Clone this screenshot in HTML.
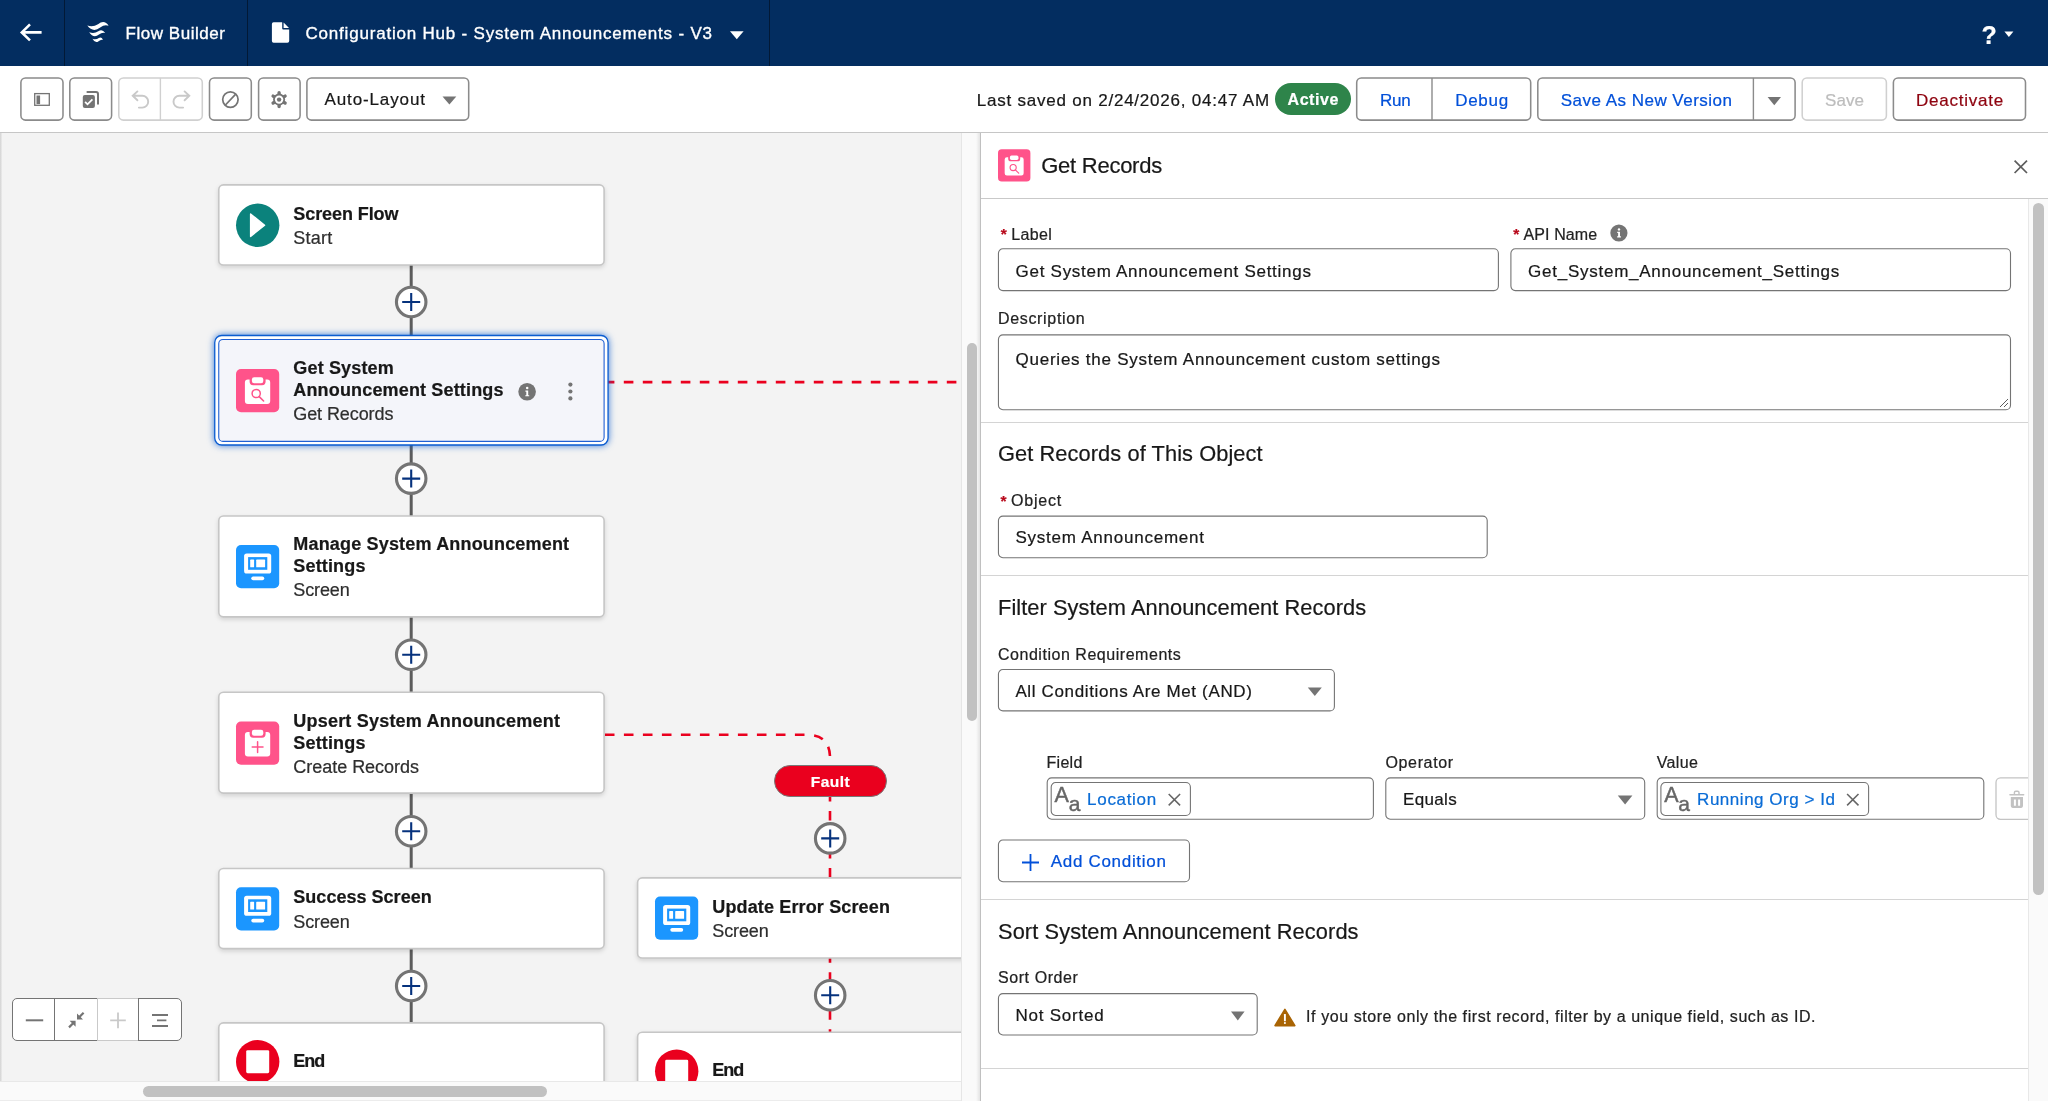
<!DOCTYPE html>
<html>
<head>
<meta charset="utf-8">
<title>Flow Builder</title>
<style>
*{box-sizing:border-box;margin:0;padding:0}
html,body{width:2048px;height:1101px;overflow:hidden;background:#fff;font-family:"Liberation Sans",sans-serif;color:#181818}
.tx{position:absolute;white-space:pre;-webkit-text-stroke:.22px currentColor}
body{will-change:transform}
.a{position:absolute}
svg{position:absolute;overflow:visible}
#hdr{position:absolute;left:0;top:0;width:2048px;height:66px;background:#032d60;overflow:hidden}
#hdr .dv{position:absolute;top:0;width:1px;height:66px;background:#021936}
#tb{position:absolute;left:0;top:66px;width:2048px;height:67px;background:#fff;border-bottom:1px solid #c6c6c6;z-index:5}
.bt{position:absolute;border:1.2px solid #747474;border-radius:5px;background:#fff}
.bt.dis{border-color:#c9c9c9}
#canvas{position:absolute;left:0;top:132px;width:961px;height:949px;background:#f3f3f3;overflow:hidden}
#hscroll{position:absolute;left:0;top:1081px;width:961px;height:20px;background:#fafafa;border-top:1px solid #e8e8e8;border-bottom:1px solid #ececec}
#vtrack{position:absolute;left:961px;top:132px;width:19px;height:969px;background:linear-gradient(90deg,#fafafa 0,#fafafa 78%,#e4e4e4 100%);border-left:1px solid #e6e6e6}
.thumb{position:absolute;background:#c1c1c1;border-radius:6px}
#panel{position:absolute;left:980px;top:132px;width:1068px;height:969px;background:#fff;border-left:1px solid #c0c0c0;overflow:hidden}
.node{position:absolute;background:#fff;border:1px solid #c9c9c9;border-radius:5px;box-shadow:0 2px 3px rgba(0,0,0,.14)}
svg.nb{filter:drop-shadow(0 2px 2px rgba(0,0,0,.13))}
svg.nbs{filter:drop-shadow(0 0 3.6px rgba(11,92,208,.8))}
.vl{position:absolute;width:3px;background:#5c5c5c}
.plus{position:absolute;width:33px;height:33px;border-radius:50%;border:3px solid #747474;background:#fff}
.plus i{position:absolute;background:#06327d}
.plus i.h{left:4.5px;top:12.5px;width:18px;height:2px}
.plus i.v{left:12.5px;top:4.5px;width:2px;height:18px}
.inp{position:absolute;border:1px solid #747474;border-radius:5px;background:#fff}
.hr{position:absolute;left:0;width:1047px;height:1px;background:#d4d4d4}
.pill{position:absolute;border:1px solid #747474;border-radius:5px;background:#fff}

</style>
</head>
<body>
<div id="hdr"><div class="dv" style="left:64px"></div><div class="dv" style="left:247px"></div><div class="dv" style="left:769px"></div><svg style="left:0;top:0" width="66" height="66"><path d="M41.6 32.4H22M30 24.4L21.8 32.4L30 40.4" fill="none" stroke="#fff" stroke-width="2.6" stroke-linecap="butt" stroke-linejoin="miter"/></svg><svg style="left:0;top:0" width="130" height="66"><g fill="#fff">
<path d="M87.3 25.6Q93 27.6 98 24.2Q104.5 19.3 108.6 25.8Q104.5 24.2 100.2 27.6Q93 33.2 87.3 25.6Z"/>
<path d="M89.2 32.2Q94 34.2 98.3 31.2Q102.3 28.4 105.2 33Q102 32 99 34.6Q93.5 38.8 89.2 32.2Z"/>
<path d="M92.4 38.8Q96 40.2 98.8 38Q101.3 36.2 103 39.8Q100.6 39.2 98.6 41.2Q95.2 43.8 92.4 38.8Z"/>
</g></svg><div class="tx" style="left:125.5px;top:25px;font-size:17px;line-height:17px;font-weight:normal;color:#fff;letter-spacing:0.541px;-webkit-text-stroke:0.35px #fff;">Flow Builder</div><svg style="left:0;top:0" width="300" height="66"><path d="M273.6 22.2H282.2V28.4Q282.2 29.4 283.2 29.4H289.2V41Q289.2 42.8 287.4 42.8H273.6Q271.9 42.8 271.9 41V24Q271.9 22.2 273.6 22.2ZM283.6 22.4L289 28H283.6Z" fill="#fff"/></svg><div class="tx" style="left:305.5px;top:25px;font-size:17px;line-height:17px;font-weight:normal;color:#fff;letter-spacing:0.798px;-webkit-text-stroke:0.35px #fff;">Configuration Hub - System Announcements - V3</div><svg style="left:0;top:0" width="760" height="66"><path d="M730 31.2H743.6L736.8 39.2Z" fill="#fff"/></svg><div class="tx" style="left:1981.5px;top:23px;font-size:25px;line-height:25px;font-weight:bold;color:#fff;letter-spacing:0.000px;">?</div><svg style="left:1990px;top:0" width="40" height="66"><path d="M14.4 31.6H23.4L18.9 37Z" fill="#fff"/></svg></div>
<div id="tb"><svg style="left:16px;top:7px" width="52" height="53"><g transform="translate(0.90 0.90)"><rect x="4" y="4" width="42.10" height="42.20" rx="4.6" fill="#fff" stroke="#8b8b8b" stroke-width="1.55"/></g></svg><svg style="left:65px;top:7px" width="52" height="53"><g transform="translate(0.80 0.90)"><rect x="4" y="4" width="41.80" height="42.20" rx="4.6" fill="#fff" stroke="#8b8b8b" stroke-width="1.55"/></g></svg><svg style="left:114px;top:7px" width="94" height="53"><g transform="translate(0.80 0.90)"><rect x="4" y="4" width="83.50" height="42.20" rx="4.6" fill="#fff" stroke="#d0d0d0" stroke-width="1.55"/></g></svg><svg style="left:205px;top:7px" width="52" height="53"><g transform="translate(0.50 0.90)"><rect x="4" y="4" width="41.80" height="42.20" rx="4.6" fill="#fff" stroke="#8b8b8b" stroke-width="1.55"/></g></svg><svg style="left:254px;top:7px" width="52" height="53"><g transform="translate(0.60 0.90)"><rect x="4" y="4" width="41.50" height="42.20" rx="4.6" fill="#fff" stroke="#8b8b8b" stroke-width="1.55"/></g></svg><svg style="left:302px;top:7px" width="172" height="53"><g transform="translate(0.90 0.90)"><rect x="4" y="4" width="161.80" height="42.20" rx="4.6" fill="#fff" stroke="#8b8b8b" stroke-width="1.55"/></g></svg><svg style="left:158px;top:11px" width="6" height="45"><g transform="translate(0.40 0.90)"><path d="M2 0V42.20" stroke="#d0d0d0" stroke-width="1.4"/></g></svg><svg style="left:0;top:0" width="480" height="66"><rect x="34.7" y="27.6" width="14.6" height="11.7" fill="none" stroke="#747474" stroke-width="1.3"/><rect x="36.5" y="29.5" width="3.6" height="8.6" fill="#747474"/><path d="M87.4 26.1H96Q98 26.1 98 28.1V37.8" fill="none" stroke="#747474" stroke-width="2" stroke-linecap="round"/><rect x="82.8" y="29" width="12.1" height="13" rx="2" fill="#747474"/><path d="M85.1 35.9L87.5 38.3L92.4 33.4" fill="none" stroke="#fff" stroke-width="1.8"/><path d="M137.4 25.4L132.7 29.8L137.4 34.3M132.9 29.8H142.3A5.9 5.9 0 0 1 142.3 41.6H138.9" fill="none" stroke="#c9c9c9" stroke-width="1.9" stroke-linecap="round"/><path d="M184.6 25.4L189.3 29.8L184.6 34.3M189.1 29.8H179.4A5.9 5.9 0 0 0 179.4 41.6H183.1" fill="none" stroke="#c9c9c9" stroke-width="1.9" stroke-linecap="round"/><circle cx="230.4" cy="33.6" r="7.7" fill="none" stroke="#747474" stroke-width="1.7"/><path d="M225.4 39L235.5 28.3" stroke="#747474" stroke-width="1.7"/><path d="M279.10 29.10L279.10 26.70M283.00 31.35L285.08 30.15M283.00 35.85L285.08 37.05M279.10 38.10L279.10 40.50M275.20 35.85L273.12 37.05M275.20 31.35L273.12 30.15" stroke="#747474" stroke-width="3.4" stroke-linecap="round"/><circle cx="279.1" cy="33.6" r="6" fill="#747474"/><circle cx="279.1" cy="33.6" r="4.2" fill="#fff"/><circle cx="279.1" cy="33.6" r="2.2" fill="#747474"/><path d="M442.5 30.4H456.3L449.4 38.6Z" fill="#747474"/></svg><div class="tx" style="left:324.5px;top:25px;font-size:17px;line-height:17px;font-weight:normal;color:#181818;letter-spacing:0.881px;">Auto-Layout</div><div class="tx" style="left:976.7px;top:26px;font-size:17px;line-height:17px;font-weight:normal;color:#181818;letter-spacing:0.779px;">Last saved on 2/24/2026, 04:47 AM</div><div class="a" style="left:1275px;top:16.7px;width:75.6px;height:32px;border-radius:16px;background:#2e844a"></div><div class="tx" style="left:1287.6px;top:26px;font-size:16px;line-height:16px;font-weight:bold;color:#fff;letter-spacing:0.534px;">Active</div><svg style="left:1352px;top:7px" width="184" height="53"><g transform="translate(0.70 0.90)"><rect x="4" y="4" width="174.00" height="42.20" rx="4.6" fill="#fff" stroke="#8b8b8b" stroke-width="1.55"/></g></svg><svg style="left:1430px;top:11px" width="5" height="45"><g transform="translate(0.00 0.90)"><path d="M2 0V42.20" stroke="#8b8b8b" stroke-width="1.4"/></g></svg><div class="tx" style="left:1379.9px;top:26px;font-size:17px;line-height:17px;font-weight:normal;color:#0250d9;letter-spacing:-0.244px;">Run</div><div class="tx" style="left:1455.2px;top:26px;font-size:17px;line-height:17px;font-weight:normal;color:#0250d9;letter-spacing:0.723px;">Debug</div><svg style="left:1533px;top:7px" width="268" height="53"><g transform="translate(0.80 0.90)"><rect x="4" y="4" width="257.30" height="42.20" rx="4.6" fill="#fff" stroke="#8b8b8b" stroke-width="1.55"/></g></svg><svg style="left:1751px;top:11px" width="6" height="45"><g transform="translate(0.40 0.90)"><path d="M2 0V42.20" stroke="#8b8b8b" stroke-width="1.4"/></g></svg><div class="tx" style="left:1560.7px;top:26px;font-size:17px;line-height:17px;font-weight:normal;color:#0250d9;letter-spacing:0.487px;">Save As New Version</div><svg style="left:1760px;top:0" width="30" height="66"><path d="M7.6 31H21L14.3 39.2Z" fill="#747474"/></svg><svg style="left:1798px;top:7px" width="94" height="53"><g transform="translate(0.20 0.90)"><rect x="4" y="4" width="84.20" height="42.20" rx="4.6" fill="#fff" stroke="#d0d0d0" stroke-width="1.55"/></g></svg><div class="tx" style="left:1825.1px;top:26px;font-size:17px;line-height:17px;font-weight:normal;color:#bdbdbd;letter-spacing:0.050px;">Save</div><svg style="left:1889px;top:7px" width="142" height="53"><g transform="translate(0.40 0.90)"><rect x="4" y="4" width="132.10" height="42.20" rx="4.6" fill="#fff" stroke="#8b8b8b" stroke-width="1.55"/></g></svg><div class="tx" style="left:1916.1px;top:26px;font-size:17px;line-height:17px;font-weight:normal;color:#8e030f;letter-spacing:0.741px;">Deactivate</div></div>
<div id="canvas"><div class="a" style="left:0;top:0;width:2px;height:949px;background:linear-gradient(90deg,#d2d2d2,#ececec)"></div><svg style="left:409px;top:133px" width="6" height="759"><g transform="translate(0.00 0.00)"><path d="M2.2 0V758" stroke="#5c5c5c" stroke-width="3"/></g></svg><svg style="left:394px;top:153px" width="36" height="35"><g transform="translate(0.20 0.00)"><circle cx="17" cy="17" r="14.75" fill="#fff" stroke="#747474" stroke-width="3.1"/><path d="M8 17H26M17 8V26" stroke="#06327d" stroke-width="2.1"/></g></svg><svg style="left:394px;top:329px" width="36" height="36"><g transform="translate(0.20 0.60)"><circle cx="17" cy="17" r="14.75" fill="#fff" stroke="#747474" stroke-width="3.1"/><path d="M8 17H26M17 8V26" stroke="#06327d" stroke-width="2.1"/></g></svg><svg style="left:394px;top:505px" width="36" height="36"><g transform="translate(0.20 0.80)"><circle cx="17" cy="17" r="14.75" fill="#fff" stroke="#747474" stroke-width="3.1"/><path d="M8 17H26M17 8V26" stroke="#06327d" stroke-width="2.1"/></g></svg><svg style="left:394px;top:682px" width="36" height="36"><g transform="translate(0.20 0.20)"><circle cx="17" cy="17" r="14.75" fill="#fff" stroke="#747474" stroke-width="3.1"/><path d="M8 17H26M17 8V26" stroke="#06327d" stroke-width="2.1"/></g></svg><svg style="left:394px;top:837px" width="36" height="35"><g transform="translate(0.20 0.00)"><circle cx="17" cy="17" r="14.75" fill="#fff" stroke="#747474" stroke-width="3.1"/><path d="M8 17H26M17 8V26" stroke="#06327d" stroke-width="2.1"/></g></svg><svg style="left:0;top:0" width="962" height="949"><g fill="none" stroke="#ea001e" stroke-width="2.6" stroke-dasharray="9.6 9.4"><path d="M604.8 250.10000000000002H962"/><path d="M604.9 602.8H807Q830 602.8 830 625.8"/><path d="M830 660V746"/><path d="M830 821.2V902"/></g></svg><svg style="left:813px;top:689px" width="36" height="36"><g transform="translate(0.20 0.40)"><circle cx="17" cy="17" r="14.75" fill="#fff" stroke="#747474" stroke-width="3.1"/><path d="M8 17H26M17 8V26" stroke="#06327d" stroke-width="2.1"/></g></svg><svg style="left:813px;top:846px" width="36" height="36"><g transform="translate(0.20 0.20)"><circle cx="17" cy="17" r="14.75" fill="#fff" stroke="#747474" stroke-width="3.1"/><path d="M8 17H26M17 8V26" stroke="#06327d" stroke-width="2.1"/></g></svg><div class="a" style="left:220px;top:54px;width:0;height:0"><svg class="nb" style="left:-12px;top:-12px" width="408" height="102"><g transform="translate(0.80 0.90)"><rect x="10" y="10" width="385.30" height="80.10" rx="4.6" fill="#fff" stroke="#c6c6c6" stroke-width="1.6"/></g></svg><svg style="left:16px;top:17px" width="45" height="45"><svg x="0.00" y="0.60" width="43.4" height="43.4" viewBox="0 0 43.4 43.4" overflow="visible"><circle cx="21.7" cy="21.7" r="21.7" fill="#0b827c"/><path d="M14.6 10.4L28.6 21.6L14.6 32.8Z" fill="#fff" stroke="#fff" stroke-width="1.4" stroke-linejoin="round"/></svg></svg><div class="tx" style="left:73.3px;top:19px;font-size:18px;line-height:18px;font-weight:bold;color:#181818;letter-spacing:-0.083px;">Screen Flow</div><div class="tx" style="left:73.3px;top:43px;font-size:18px;line-height:18px;font-weight:normal;color:#2e2e2e;letter-spacing:0.246px;">Start</div></div><div class="a" style="left:220px;top:208px;width:0;height:0"><svg class="nbs" style="left:-20px;top:-19px" width="424" height="139"><g transform="translate(0.75 0.50)"><rect x="14" y="14" width="393.30" height="109.50" rx="7" fill="#fff" stroke="#0b5cd0" stroke-width="1.3"/></g></svg><svg style="left:-12px;top:-11px" width="408" height="124"><g transform="translate(0.75 0.50)"><rect x="10" y="10" width="385.35" height="101.90" rx="4.2" fill="#f4f5fa" stroke="#1f5fd3" stroke-width="1.1"/></g></svg><svg style="left:16px;top:29px" width="45" height="45"><svg x="0.00" y="0.00" width="43.2" height="43.2" viewBox="0 0 43.2 43.2" overflow="visible"><rect width="43.2" height="43.2" rx="5" fill="#ff538a"/>
<path d="M11.9 10.6H13.6V12.6Q13.6 16.2 17.2 16.2H26Q29.6 16.2 29.6 12.6V10.6H31.2Q34.2 10.6 34.2 13.6V32.1Q34.2 35.1 31.2 35.1H11.9Q8.9 35.1 8.9 32.1V13.6Q8.9 10.6 11.9 10.6Z" fill="#fff"/>
<rect x="15.9" y="8.3" width="11.4" height="6" rx="2.2" fill="#fff"/>
<circle cx="20.2" cy="24.5" r="4.1" fill="none" stroke="#ff538a" stroke-width="1.5"/><path d="M23.2 27.6L27.6 32" stroke="#ff538a" stroke-width="1.6" stroke-linecap="round"/></svg></svg><div class="tx" style="left:73.3px;top:19px;font-size:18px;line-height:18px;font-weight:bold;color:#181818;letter-spacing:0.000px;letter-spacing:.16px;">Get System</div><div class="tx" style="left:73.3px;top:41px;font-size:18px;line-height:18px;font-weight:bold;color:#181818;letter-spacing:0.159px;">Announcement Settings</div><div class="tx" style="left:73.3px;top:65px;font-size:18px;line-height:18px;font-weight:normal;color:#2e2e2e;letter-spacing:-0.095px;">Get Records</div><svg style="left:298px;top:43px" width="19" height="19"><g transform="translate(0.30 0.00)"><circle cx="8.8" cy="8.8" r="8.8" fill="#747474"/><circle cx="8.9" cy="5.1" r="1.25" fill="#fff"/><path d="M7.1 7.6H9.9V12.2H10.9V13.3H7V12.2H8V8.7H7.1Z" fill="#fff"/></g></svg><svg style="left:348px;top:42px" width="6" height="6"><g transform="translate(0.30 0.50)"><circle cx="2.1" cy="2.1" r="2.1" fill="#747474"/></g></svg><svg style="left:348px;top:49px" width="6" height="6"><g transform="translate(0.30 0.40)"><circle cx="2.1" cy="2.1" r="2.1" fill="#747474"/></g></svg><svg style="left:348px;top:56px" width="6" height="6"><g transform="translate(0.30 0.30)"><circle cx="2.1" cy="2.1" r="2.1" fill="#747474"/></g></svg></div><div class="a" style="left:220px;top:385px;width:0;height:0"><svg class="nb" style="left:-12px;top:-11px" width="408" height="122"><g transform="translate(0.80 0.00)"><rect x="10" y="10" width="385.30" height="100.90" rx="4.6" fill="#fff" stroke="#c6c6c6" stroke-width="1.6"/></g></svg><svg style="left:16px;top:28px" width="45" height="45"><svg x="0.00" y="0.00" width="43.2" height="43.2" viewBox="0 0 43.2 43.2" overflow="visible"><rect width="43.2" height="43.2" rx="5" fill="#1b96ff"/>
<rect x="8.1" y="8.5" width="27.1" height="20.1" rx="2.6" fill="#fff"/><rect x="12.1" y="12.1" width="19.2" height="12.7" fill="#1b96ff"/>
<rect x="14.2" y="14.6" width="3.9" height="7.7" rx=".6" fill="#fff"/><rect x="20.2" y="14.6" width="8.9" height="7.7" rx=".6" fill="#fff"/>
<rect x="15.3" y="31.5" width="12.9" height="3.7" rx="1.85" fill="#fff"/></svg></svg><div class="tx" style="left:73.3px;top:18px;font-size:18px;line-height:18px;font-weight:bold;color:#181818;letter-spacing:0.176px;">Manage System Announcement</div><div class="tx" style="left:73.3px;top:40px;font-size:18px;line-height:18px;font-weight:bold;color:#181818;letter-spacing:0.000px;letter-spacing:.16px;">Settings</div><div class="tx" style="left:73.3px;top:64px;font-size:18px;line-height:18px;font-weight:normal;color:#2e2e2e;letter-spacing:-0.129px;">Screen</div></div><div class="a" style="left:220px;top:561px;width:0;height:0"><svg class="nb" style="left:-12px;top:-11px" width="408" height="123"><g transform="translate(0.80 0.20)"><rect x="10" y="10" width="385.30" height="100.90" rx="4.6" fill="#fff" stroke="#c6c6c6" stroke-width="1.6"/></g></svg><svg style="left:16px;top:28px" width="45" height="45"><svg x="0.00" y="0.50" width="43.2" height="43.2" viewBox="0 0 43.2 43.2" overflow="visible"><rect width="43.2" height="43.2" rx="5" fill="#ff538a"/>
<path d="M11.9 10.6H13.6V12.6Q13.6 16.2 17.2 16.2H26Q29.6 16.2 29.6 12.6V10.6H31.2Q34.2 10.6 34.2 13.6V32.1Q34.2 35.1 31.2 35.1H11.9Q8.9 35.1 8.9 32.1V13.6Q8.9 10.6 11.9 10.6Z" fill="#fff"/>
<rect x="15.9" y="8.3" width="11.4" height="6" rx="2.2" fill="#fff"/>
<path d="M21.6 20.2V31M16.2 25.6H27" stroke="#ff538a" stroke-width="1.5" stroke-linecap="round"/></svg></svg><div class="tx" style="left:73.3px;top:19px;font-size:18px;line-height:18px;font-weight:bold;color:#181818;letter-spacing:0.208px;">Upsert System Announcement</div><div class="tx" style="left:73.3px;top:41px;font-size:18px;line-height:18px;font-weight:bold;color:#181818;letter-spacing:0.000px;letter-spacing:.16px;">Settings</div><div class="tx" style="left:73.3px;top:65px;font-size:18px;line-height:18px;font-weight:normal;color:#2e2e2e;letter-spacing:-0.028px;">Create Records</div></div><div class="a" style="left:220px;top:738px;width:0;height:0"><svg class="nb" style="left:-12px;top:-12px" width="408" height="102"><g transform="translate(0.80 0.50)"><rect x="10" y="10" width="385.30" height="80.10" rx="4.6" fill="#fff" stroke="#c6c6c6" stroke-width="1.6"/></g></svg><svg style="left:16px;top:17px" width="45" height="45"><svg x="0.00" y="0.20" width="43.2" height="43.2" viewBox="0 0 43.2 43.2" overflow="visible"><rect width="43.2" height="43.2" rx="5" fill="#1b96ff"/>
<rect x="8.1" y="8.5" width="27.1" height="20.1" rx="2.6" fill="#fff"/><rect x="12.1" y="12.1" width="19.2" height="12.7" fill="#1b96ff"/>
<rect x="14.2" y="14.6" width="3.9" height="7.7" rx=".6" fill="#fff"/><rect x="20.2" y="14.6" width="8.9" height="7.7" rx=".6" fill="#fff"/>
<rect x="15.3" y="31.5" width="12.9" height="3.7" rx="1.85" fill="#fff"/></svg></svg><div class="tx" style="left:73.3px;top:18px;font-size:18px;line-height:18px;font-weight:bold;color:#181818;letter-spacing:0.024px;">Success Screen</div><div class="tx" style="left:73.3px;top:43px;font-size:18px;line-height:18px;font-weight:normal;color:#2e2e2e;letter-spacing:-0.129px;">Screen</div></div><div class="a" style="left:220px;top:892px;width:0;height:0"><svg class="nb" style="left:-12px;top:-12px" width="408" height="102"><g transform="translate(0.80 0.90)"><rect x="10" y="10" width="385.30" height="80.10" rx="4.6" fill="#fff" stroke="#c6c6c6" stroke-width="1.6"/></g></svg><svg style="left:16px;top:16px" width="45" height="45"><svg x="0.00" y="0.00" width="43.4" height="43.4" viewBox="0 0 43.4 43.4" overflow="visible"><circle cx="21.7" cy="21.7" r="21.7" fill="#ea001e"/><rect x="10.2" y="10.2" width="23" height="23" rx="1.4" fill="#fff"/></svg></svg><div class="tx" style="left:73.3px;top:28px;font-size:18px;line-height:18px;font-weight:bold;color:#181818;letter-spacing:-1.000px;">End</div></div><div class="a" style="left:773.5px;top:632.8px;width:113.4px;height:32px;border-radius:16px;background:#ea001e;border:1px solid #777"></div><div class="tx" style="left:810.7px;top:642px;font-size:15.5px;line-height:15.5px;font-weight:bold;color:#fff;letter-spacing:0.517px;">Fault</div><div class="a" style="left:639px;top:747px;width:0;height:0"><svg class="nb" style="left:-12px;top:-12px" width="407" height="102"><g transform="translate(0.60 0.90)"><rect x="10" y="10" width="385.40" height="80.10" rx="4.6" fill="#fff" stroke="#c6c6c6" stroke-width="1.6"/></g></svg><svg style="left:16px;top:17px" width="45" height="45"><svg x="0.00" y="0.50" width="43.2" height="43.2" viewBox="0 0 43.2 43.2" overflow="visible"><rect width="43.2" height="43.2" rx="5" fill="#1b96ff"/>
<rect x="8.1" y="8.5" width="27.1" height="20.1" rx="2.6" fill="#fff"/><rect x="12.1" y="12.1" width="19.2" height="12.7" fill="#1b96ff"/>
<rect x="14.2" y="14.6" width="3.9" height="7.7" rx=".6" fill="#fff"/><rect x="20.2" y="14.6" width="8.9" height="7.7" rx=".6" fill="#fff"/>
<rect x="15.3" y="31.5" width="12.9" height="3.7" rx="1.85" fill="#fff"/></svg></svg><div class="tx" style="left:73.3px;top:19px;font-size:18px;line-height:18px;font-weight:bold;color:#181818;letter-spacing:0.141px;">Update Error Screen</div><div class="tx" style="left:73.3px;top:43px;font-size:18px;line-height:18px;font-weight:normal;color:#2e2e2e;letter-spacing:-0.129px;">Screen</div></div><div class="a" style="left:639px;top:901px;width:0;height:0"><svg class="nb" style="left:-12px;top:-11px" width="407" height="102"><g transform="translate(0.60 0.30)"><rect x="10" y="10" width="385.40" height="80.70" rx="4.6" fill="#fff" stroke="#c6c6c6" stroke-width="1.6"/></g></svg><svg style="left:16px;top:16px" width="45" height="45"><svg x="0.00" y="0.50" width="43.4" height="43.4" viewBox="0 0 43.4 43.4" overflow="visible"><circle cx="21.7" cy="21.7" r="21.7" fill="#ea001e"/><rect x="10.2" y="10.2" width="23" height="23" rx="1.4" fill="#fff"/></svg></svg><div class="tx" style="left:73.3px;top:28px;font-size:18px;line-height:18px;font-weight:bold;color:#181818;letter-spacing:-1.000px;">End</div></div><div class="a" style="left:12px;top:866px;width:170px;height:43px;border:1px solid #747474;border-radius:5px;background:#fff"></div><div class="a" style="left:54px;top:866px;width:1px;height:43px;background:#747474"></div><div class="a" style="left:138px;top:866px;width:1px;height:43px;background:#747474"></div><div class="a" style="left:97px;top:866px;width:41px;height:43px;border-top:1px solid #c9c9c9;border-bottom:1px solid #c9c9c9;border-left:1px solid #c9c9c9;background:#fff"></div><svg style="left:0;top:866px" width="190" height="43"><path d="M25.8 22.3H43.2" stroke="#747474" stroke-width="2"/><path d="M83.6 14.8L78.4 20M74.4 24L69 29.4" stroke="#747474" stroke-width="2.2" stroke-linecap="butt"/><path d="M77 15.4V21.4H83Z M69.6 22.8H75.6V28.8Z" fill="#747474"/><path d="M110.2 22.3H125.8M118 14.4V30.2" stroke="#c9c9c9" stroke-width="1.8"/><path d="M152 17H168M157 22.3H166.4M152 28H168" stroke="#747474" stroke-width="1.8"/></svg></div><div id="hscroll"><div class="thumb" style="left:142.5px;top:4px;width:404px;height:11px"></div></div><div id="vtrack"><div class="thumb" style="left:5px;top:211px;width:10px;height:378px;border-radius:5px"></div></div>
<div id="panel"><svg style="left:17px;top:17px" width="34" height="34"><svg x="0.00" y="0.20" width="32.4" height="32.4" viewBox="0 0 43.2 43.2" overflow="visible"><rect width="43.2" height="43.2" rx="5" fill="#ff538a"/>
<path d="M11.9 10.6H13.6V12.6Q13.6 16.2 17.2 16.2H26Q29.6 16.2 29.6 12.6V10.6H31.2Q34.2 10.6 34.2 13.6V32.1Q34.2 35.1 31.2 35.1H11.9Q8.9 35.1 8.9 32.1V13.6Q8.9 10.6 11.9 10.6Z" fill="#fff"/>
<rect x="15.9" y="8.3" width="11.4" height="6" rx="2.2" fill="#fff"/>
<circle cx="20.2" cy="24.5" r="4.1" fill="none" stroke="#ff538a" stroke-width="1.5"/><path d="M23.2 27.6L27.6 32" stroke="#ff538a" stroke-width="1.6" stroke-linecap="round"/></svg></svg><div class="tx" style="left:60.2px;top:23px;font-size:22px;line-height:22px;font-weight:normal;color:#181818;letter-spacing:-0.250px;">Get Records</div><svg style="left:1033px;top:28px" width="14" height="14"><path d="M.6 .6L13 13M13 .6L.6 13" stroke="#5c5c5c" stroke-width="1.7" fill="none"/></svg><div class="a" style="left:0;top:66px;width:1067px;height:1px;background:#c9c9c9"></div><div class="a" style="left:1047px;top:67px;width:20px;height:902px;background:#fafafa;border-left:1px solid #e8e8e8"></div><div class="thumb" style="left:1052px;top:71px;width:11px;height:692px;border-radius:5.5px"></div><div class="a" style="left:0;top:67px;width:1047px;height:902px;overflow:hidden"><div class="tx" style="left:19.8px;top:27px;font-size:15.5px;line-height:15.5px;font-weight:bold;color:#b80a1c;letter-spacing:0.000px;">*</div><div class="tx" style="left:30.2px;top:28px;font-size:16px;line-height:16px;font-weight:normal;color:#222222;letter-spacing:0.361px;">Label</div><svg style="left:13px;top:45px" width="510" height="52"><g transform="translate(0.45 0.70)"><rect x="4" y="4" width="499.95" height="41.90" rx="4.5" fill="#fff" stroke="#747474" stroke-width="1.1"/></g></svg><div class="tx" style="left:34.6px;top:64px;font-size:17px;line-height:17px;font-weight:normal;color:#181818;letter-spacing:0.716px;">Get System Announcement Settings</div><div class="tx" style="left:532.2px;top:27px;font-size:15.5px;line-height:15.5px;font-weight:bold;color:#b80a1c;letter-spacing:0.000px;">*</div><div class="tx" style="left:542.6px;top:28px;font-size:16px;line-height:16px;font-weight:normal;color:#222222;letter-spacing:0.083px;">API Name</div><svg style="left:629px;top:25px" width="19" height="19"><svg x="0.30" y="0.40" width="17.2" height="17.2" viewBox="0 0 17.6 17.6" overflow="visible"><circle cx="8.8" cy="8.8" r="8.8" fill="#747474"/><circle cx="8.9" cy="5.1" r="1.25" fill="#fff"/><path d="M7.1 7.6H9.9V12.2H10.9V13.3H7V12.2H8V8.7H7.1Z" fill="#fff"/></svg></svg><svg style="left:525px;top:45px" width="510" height="52"><g transform="translate(0.90 0.70)"><rect x="4" y="4" width="499.60" height="41.90" rx="4.5" fill="#fff" stroke="#747474" stroke-width="1.1"/></g></svg><div class="tx" style="left:547.1px;top:64px;font-size:17px;line-height:17px;font-weight:normal;color:#181818;letter-spacing:0.741px;">Get_System_Announcement_Settings</div><div class="tx" style="left:17.0px;top:112px;font-size:16px;line-height:16px;font-weight:normal;color:#222222;letter-spacing:0.667px;">Description</div><svg style="left:13px;top:131px" width="1022" height="85"><g transform="translate(0.45 0.90)"><rect x="4" y="4" width="1012.05" height="74.90" rx="4.5" fill="#fff" stroke="#747474" stroke-width="1.1"/></g></svg><div class="tx" style="left:34.6px;top:152px;font-size:17px;line-height:17px;font-weight:normal;color:#181818;letter-spacing:0.744px;">Queries the System Announcement custom settings</div><svg style="left:1018px;top:199px" width="10" height="10"><path d="M9 1L1 9M9 5L5 9" stroke="#5c5c5c" stroke-width="1"/></svg><div class="hr" style="top:223px"></div><div class="tx" style="left:17.0px;top:244px;font-size:21.8px;line-height:21.8px;font-weight:normal;color:#181818;letter-spacing:0.085px;">Get Records of This Object</div><div class="tx" style="left:19.6px;top:294px;font-size:15.5px;line-height:15.5px;font-weight:bold;color:#b80a1c;letter-spacing:0.000px;">*</div><div class="tx" style="left:30.0px;top:294px;font-size:16px;line-height:16px;font-weight:normal;color:#222222;letter-spacing:0.790px;">Object</div><svg style="left:13px;top:313px" width="499" height="51"><g transform="translate(0.45 0.10)"><rect x="4" y="4" width="488.75" height="41.60" rx="4.5" fill="#fff" stroke="#747474" stroke-width="1.1"/></g></svg><div class="tx" style="left:34.4px;top:330px;font-size:17px;line-height:17px;font-weight:normal;color:#181818;letter-spacing:0.765px;">System Announcement</div><div class="hr" style="top:376.29999999999995px"></div><div class="tx" style="left:17.0px;top:398px;font-size:21.8px;line-height:21.8px;font-weight:normal;color:#181818;letter-spacing:0.067px;">Filter System Announcement Records</div><div class="tx" style="left:17.0px;top:448px;font-size:16px;line-height:16px;font-weight:normal;color:#222222;letter-spacing:0.531px;">Condition Requirements</div><svg style="left:13px;top:466px" width="346" height="51"><g transform="translate(0.45 0.50)"><rect x="4" y="4" width="335.95" height="41.40" rx="4.5" fill="#fff" stroke="#747474" stroke-width="1.1"/></g></svg><div class="tx" style="left:34.4px;top:484px;font-size:17px;line-height:17px;font-weight:normal;color:#181818;letter-spacing:0.641px;">All Conditions Are Met (AND)</div><svg style="left:326px;top:488px" width="16" height="10"><g transform="translate(0.80 0.40)"><path d="M0 0H14L7.0 8.6Z" fill="#747474"/></g></svg><div class="tx" style="left:65.6px;top:556px;font-size:16px;line-height:16px;font-weight:normal;color:#222222;letter-spacing:0.253px;">Field</div><div class="tx" style="left:404.4px;top:556px;font-size:16px;line-height:16px;font-weight:normal;color:#222222;letter-spacing:0.666px;">Operator</div><div class="tx" style="left:675.8px;top:556px;font-size:16px;line-height:16px;font-weight:normal;color:#222222;letter-spacing:0.316px;">Value</div><svg style="left:62px;top:574px" width="336" height="52"><g transform="translate(0.20 0.90)"><rect x="4" y="4" width="326.20" height="41.40" rx="4.5" fill="#fff" stroke="#747474" stroke-width="1.1"/></g></svg><svg style="left:400px;top:574px" width="269" height="52"><g transform="translate(0.80 0.90)"><rect x="4" y="4" width="258.90" height="41.40" rx="4.5" fill="#fff" stroke="#747474" stroke-width="1.1"/></g></svg><div class="tx" style="left:422.1px;top:592px;font-size:17px;line-height:17px;font-weight:normal;color:#181818;letter-spacing:0.323px;">Equals</div><svg style="left:636px;top:596px" width="17" height="11"><g transform="translate(0.80 0.40)"><path d="M0 0H14.6L7.3 9Z" fill="#747474"/></g></svg><svg style="left:672px;top:574px" width="336" height="52"><g transform="translate(0.20 0.90)"><rect x="4" y="4" width="326.60" height="41.40" rx="4.5" fill="#fff" stroke="#747474" stroke-width="1.1"/></g></svg><svg style="left:66px;top:579px" width="149" height="43"><g transform="translate(0.20 0.50)"><rect x="4" y="4" width="139.20" height="33.00" rx="4.5" fill="#fff" stroke="#747474" stroke-width="1.1"/></g></svg><div class="tx" style="left:73.6px;top:586px;font-size:21.5px;line-height:21.5px;font-weight:normal;color:#666;letter-spacing:0.000px;-webkit-text-stroke:.45px #666;">A</div><div class="tx" style="left:87.7px;top:594px;font-size:21px;line-height:21px;font-weight:normal;color:#666;letter-spacing:0.000px;-webkit-text-stroke:.45px #666;">a</div><div class="tx" style="left:106.1px;top:592px;font-size:17px;line-height:17px;font-weight:normal;color:#0a6cd6;letter-spacing:0.688px;">Location</div><svg style="left:186px;top:594px" width="15" height="15"><g transform="translate(0.90 0.20)"><path d="M.8 .8L12.2 12.2M12.2 .8L.8 12.2" stroke="#666" stroke-width="1.55" fill="none"/></g></svg><svg style="left:675px;top:579px" width="218" height="43"><g transform="translate(0.90 0.50)"><rect x="4" y="4" width="207.70" height="33.00" rx="4.5" fill="#fff" stroke="#747474" stroke-width="1.1"/></g></svg><div class="tx" style="left:683.2px;top:586px;font-size:21.5px;line-height:21.5px;font-weight:normal;color:#666;letter-spacing:0.000px;-webkit-text-stroke:.45px #666;">A</div><div class="tx" style="left:697.3px;top:594px;font-size:21px;line-height:21px;font-weight:normal;color:#666;letter-spacing:0.000px;-webkit-text-stroke:.45px #666;">a</div><div class="tx" style="left:716.1px;top:592px;font-size:17px;line-height:17px;font-weight:normal;color:#0a6cd6;letter-spacing:0.523px;">Running Org &gt; Id</div><svg style="left:865px;top:594px" width="15" height="15"><g transform="translate(0.30 0.20)"><path d="M.8 .8L12.2 12.2M12.2 .8L.8 12.2" stroke="#666" stroke-width="1.55" fill="none"/></g></svg><svg style="left:1011px;top:574px" width="53" height="52"><g transform="translate(0.00 0.90)"><rect x="4" y="4" width="44.00" height="41.40" rx="4.5" fill="#fff" stroke="#c4c4c4" stroke-width="1.3"/></g></svg><svg style="left:1027px;top:590px" width="19" height="21"><g transform="translate(0.00 0.00)"><g transform="translate(-2008 -789)"><rect x="2009.2" y="794" width="15.2" height="1.5" rx=".7" fill="#c2c2c2"/><path d="M2014.4 794.2V792.6Q2014.4 791.2 2015.8 791.2H2017.6Q2019 791.2 2019 792.6V794.2" fill="none" stroke="#c2c2c2" stroke-width="1.4"/><path d="M2010.8 797.1H2023V806.1Q2023 807.9 2021.2 807.9H2012.6Q2010.8 807.9 2010.8 806.1Z" fill="#c2c2c2"/><path d="M2014.9 799.6V805.8M2019.1 799.6V805.8" stroke="#fff" stroke-width="2"/></g></g></svg><svg style="left:13px;top:637px" width="201" height="51"><g transform="translate(0.45 0.00)"><rect x="4" y="4" width="191.05" height="41.80" rx="4.5" fill="#fff" stroke="#747474" stroke-width="1.1"/></g></svg><svg style="left:40.5px;top:655.3px" width="17" height="17"><path d="M8.5 0V17M0 8.5H17" stroke="#0250d9" stroke-width="1.8"/></svg><div class="tx" style="left:69.7px;top:654px;font-size:17px;line-height:17px;font-weight:normal;color:#0250d9;letter-spacing:0.699px;">Add Condition</div><div class="hr" style="top:700px"></div><div class="tx" style="left:17.0px;top:722px;font-size:21.8px;line-height:21.8px;font-weight:normal;color:#181818;letter-spacing:0.100px;">Sort System Announcement Records</div><div class="tx" style="left:17.0px;top:771px;font-size:16px;line-height:16px;font-weight:normal;color:#222222;letter-spacing:0.568px;">Sort Order</div><svg style="left:13px;top:790px" width="269" height="51"><g transform="translate(0.45 0.60)"><rect x="4" y="4" width="258.75" height="41.40" rx="4.5" fill="#fff" stroke="#747474" stroke-width="1.1"/></g></svg><div class="tx" style="left:34.4px;top:808px;font-size:17px;line-height:17px;font-weight:normal;color:#181818;letter-spacing:0.770px;">Not Sorted</div><svg style="left:250px;top:812px" width="15" height="11"><g transform="translate(0.00 0.40)"><path d="M0 0H13.6L6.8 9Z" fill="#747474"/></g></svg><svg style="left:292px;top:808px" width="25" height="22"><g transform="translate(0.60 0.60)"><path d="M11.3 1.8L21.2 18H1.4Z" fill="#a96404" stroke="#a96404" stroke-width="1.6" stroke-linejoin="round"/><rect x="10.35" y="6.3" width="1.9" height="7.4" rx=".5" fill="#fff"/><circle cx="11.3" cy="15.4" r="1.05" fill="#fff"/></g></svg><div class="tx" style="left:325.1px;top:810px;font-size:16px;line-height:16px;font-weight:normal;color:#222222;letter-spacing:0.566px;">If you store only the first record, filter by a unique field, such as ID.</div><div class="hr" style="top:869.4000000000001px"></div></div></div>
</body>
</html>
